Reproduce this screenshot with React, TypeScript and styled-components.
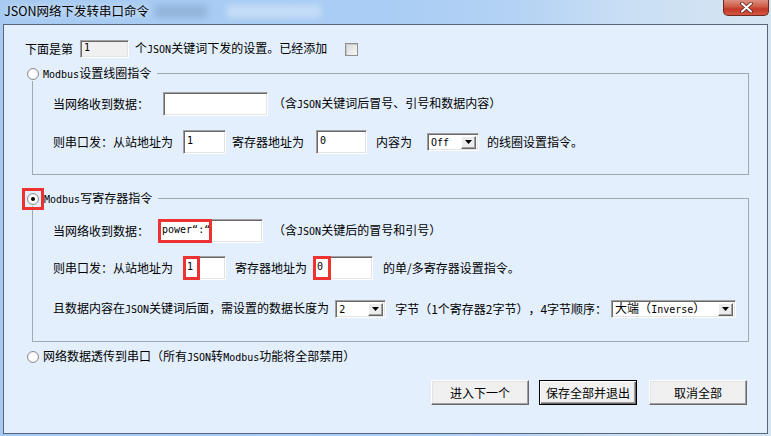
import React from "react";
import styled, { createGlobalStyle, css } from "styled-components";

const GlobalStyle = createGlobalStyle`
  html, body { margin: 0; padding: 0; }
  body {
    background: #a9cdf4;
    font-family: "Noto Sans CJK SC", "DejaVu Sans", sans-serif;
    font-size: 12px;
    color: #000;
    text-spacing-trim: space-all;
  }
`;

const Window = styled.div`
  width: 771px;
  height: 436px;
  display: flex;
  flex-direction: column;
  overflow: hidden;
  background: linear-gradient(90deg, #a6caf2 0%, #a9cdf4 50%, #b3d2f4 66%, #cadff4 82%, #d6e5f2 100%);
`;

const TitleBar = styled.div`
  height: 24px;
  flex-shrink: 0;
  display: flex;
  align-items: flex-start;
`;

const Title = styled.div`
  margin: 4px 0 0 4px;
  font-size: 12.5px;
  line-height: 14px;
  white-space: nowrap;
  text-shadow: 0 0 6px rgba(255, 255, 255, 0.9);
`;

// blurred shapes of the window behind the glass frame
const Ghost = styled.div<{ $w: number; $ml: number; $tone: string }>`
  margin: 5px 0 0 ${(p) => p.$ml}px;
  width: ${(p) => p.$w}px;
  height: 13px;
  background: ${(p) => p.$tone};
  filter: blur(3px);
`;

const CloseBtn = styled.div`
  margin: 0 2px 0 auto;
  width: 46px;
  height: 16px;
  box-sizing: border-box;
  border: 1px solid #6e2a22;
  border-top: none;
  border-radius: 0 0 5px 5px;
  background: linear-gradient(#dc8f80 0%, #cf5a46 45%, #c2382a 60%, #d4583f 100%);
  display: flex;
  align-items: center;
  justify-content: center;
`;

const Client = styled.div`
  flex: 1;
  min-height: 0;
  margin: 0 3px 2px 3px;
  border: 1px solid #566579;
  background: #e3effd;
  display: flex;
  flex-direction: column;
  padding-top: 15px;
`;

const Row = styled.div<{ $top?: number; $left?: number; $h?: number }>`
  display: flex;
  align-items: center;
  white-space: nowrap;
  height: ${(p) => p.$h ?? 24}px;
  margin-top: ${(p) => p.$top ?? 0}px;
  margin-left: ${(p) => p.$left ?? 0}px;
`;

const Text = styled.span<{ $ml?: number }>`
  margin-left: ${(p) => p.$ml ?? 0}px;
  line-height: 14px;
`;

const Lat = styled.span`
  font-family: "DejaVu Sans Mono", "Liberation Mono", monospace;
  font-size: 10px;
`;

const Edit = styled.div<{ $w: number; $h?: number; $ml?: number; $bg?: string }>`
  position: relative;
  box-sizing: border-box;
  width: ${(p) => p.$w}px;
  height: ${(p) => p.$h ?? 24}px;
  margin-left: ${(p) => p.$ml ?? 0}px;
  background: ${(p) => p.$bg ?? "#fff"};
  border: 1px solid;
  border-color: #a0a0a0 #fff #fff #a0a0a0;
  box-shadow: inset 1px 1px 0 #696969, inset -1px -1px 0 #e3e3e3;
  display: flex;
  align-items: center;
  padding: 0 0 2px 3px;
  font-family: "DejaVu Sans Mono", "Liberation Mono", monospace;
  font-size: 10px;
  line-height: 12px;
`;

const Caret = styled.span`
  width: 1px;
  height: 13px;
  background: #000;
  margin-left: 1px;
`;

// red annotation frame drawn over part of a field
const Mark = styled.span<{ $w: number; $left?: number }>`
  position: absolute;
  left: ${(p) => p.$left ?? -1}px;
  top: -1px;
  bottom: -1px;
  width: ${(p) => p.$w}px;
  box-sizing: border-box;
  border: 3px solid #ee3131;
`;

const Combo = styled.div<{ $w: number; $ml?: number }>`
  box-sizing: border-box;
  width: ${(p) => p.$w}px;
  height: 18px;
  margin-left: ${(p) => p.$ml ?? 0}px;
  background: #fff;
  border: 1px solid;
  border-color: #a0a0a0 #fff #fff #a0a0a0;
  box-shadow: inset 1px 1px 0 #696969, inset -1px -1px 0 #e3e3e3;
  display: flex;
  align-items: center;
  padding: 0 2px 0 3px;
`;

const ComboText = styled.span`
  flex: 1;
  line-height: 14px;
  white-space: nowrap;
`;

const DropBtn = styled.span`
  width: 15px;
  height: 13px;
  box-sizing: border-box;
  background: #ececec;
  border: 1px solid;
  border-color: #fff #696969 #696969 #fff;
  box-shadow: inset -1px -1px 0 #a0a0a0;
  display: flex;
  align-items: center;
  justify-content: center;
`;

const RadioBox = styled.span<{ $checked?: boolean }>`
  width: 12px;
  height: 12px;
  box-sizing: border-box;
  flex-shrink: 0;
  border-radius: 50%;
  border: 1px solid #8c8c8c;
  background: radial-gradient(circle at 50% 50%, #fff 0 45%, #e4e4e4 100%);
  display: inline-flex;
  align-items: center;
  justify-content: center;
  ${(p) =>
    p.$checked &&
    css`
      &::after {
        content: "";
        width: 4px;
        height: 4px;
        border-radius: 50%;
        background: #000;
      }
    `}
`;

const RadioMark = styled.span`
  display: inline-flex;
  outline: 3px solid #ee3131;
  outline-offset: 2px;
`;

const Check = styled.span<{ $ml: number }>`
  width: 13px;
  height: 13px;
  box-sizing: border-box;
  margin-left: ${(p) => p.$ml}px;
  border: 1px solid #8e8f8f;
  background: linear-gradient(135deg, #d8d8d8, #f8f8f8);
  box-shadow: inset 1px 1px 0 #c8c8c8;
`;

const Group = styled.fieldset<{ $top: number; $pt: number; $pb: number }>`
  margin: ${(p) => p.$top}px 18px 0 28px;
  padding: ${(p) => p.$pt}px 0 ${(p) => p.$pb}px 20px;
  border: 1px solid #a3a9b0;
  min-width: 0;
`;

const Legend = styled.legend<{ $gap: number }>`
  display: flex;
  align-items: center;
  gap: ${(p) => p.$gap}px;
  height: 15px;
  margin-left: -26px;
  padding: 0 6px 0 0;
  white-space: nowrap;
  line-height: 15px;
`;

const ButtonRow = styled.div`
  display: flex;
  justify-content: flex-end;
  margin: 16px 20px 0 0;
`;

const Btn = styled.button<{ $ml: number; $default?: boolean }>`
  width: 98px;
  height: 25px;
  box-sizing: border-box;
  margin-left: ${(p) => p.$ml}px;
  padding: 0;
  font-family: "Noto Sans CJK SC", sans-serif;
  font-size: 12px;
  color: #000;
  background: #f0f0f0;
  border: 1px solid;
  border-color: #fff #696969 #696969 #fff;
  box-shadow: inset -1px -1px 0 #a0a0a0, inset 1px 1px 0 #e3e3e3;
  ${(p) =>
    p.$default &&
    css`
      border-color: #000;
      box-shadow: inset 1px 1px 0 #fff, inset -1px -1px 0 #696969, inset -2px -2px 0 #a0a0a0;
    `}
`;

const Radio = ({ checked, marked }: { checked?: boolean; marked?: boolean }) =>
  marked ? (
    <RadioMark>
      <RadioBox $checked={checked} />
    </RadioMark>
  ) : (
    <RadioBox $checked={checked} />
  );

const Arrow = () => (
  <svg width="7" height="4" viewBox="0 0 7 4">
    <polygon points="0,0 7,0 3.5,4" fill="#000" />
  </svg>
);

const Select = ({ w, ml, children }: { w: number; ml: number; children: React.ReactNode }) => (
  <Combo $w={w} $ml={ml}>
    <ComboText>{children}</ComboText>
    <DropBtn>
      <Arrow />
    </DropBtn>
  </Combo>
);

export default function App() {
  return (
    <>
      <GlobalStyle />
      <Window>
        <TitleBar>
          <Title>JSON网络下发转串口命令</Title>
          <Ghost $w={52} $ml={6} $tone="rgba(110, 140, 175, 0.35)" />
          <Ghost $w={94} $ml={20} $tone="rgba(205, 225, 248, 0.8)" />
          <CloseBtn>
            <svg width="13" height="11" viewBox="0 0 13 11">
              <path d="M2 1.5l9 8M11 1.5l-9 8" stroke="#5a2520" strokeWidth="3.6" strokeLinecap="round" />
              <path d="M2 1.5l9 8M11 1.5l-9 8" stroke="#fff" strokeWidth="2" strokeLinecap="round" />
            </svg>
          </CloseBtn>
        </TitleBar>

        <Client>
          <Row $h={18} $left={21}>
            <Text>下面是第</Text>
            <Edit $w={49} $h={18} $ml={7} $bg="#f0f0f0">1</Edit>
            <Text $ml={6}>
              个<Lat>JSON</Lat>关键词下发的设置。已经添加
            </Text>
            <Check $ml={18} />
          </Row>

          <Group $top={8} $pt={11} $pb={20}>
            <Legend $gap={4}>
              <Radio />
              <span>
                <Lat>Modbus</Lat>设置线圈指令
              </span>
            </Legend>
            <Row>
              <Text>当网络收到数据：</Text>
              <Edit $w={105} $ml={14} />
              <Text $ml={5}>
                （含<Lat>JSON</Lat>关键词后冒号、引号和数据内容）
              </Text>
            </Row>
            <Row $top={14}>
              <Text>则串口发：从站地址为</Text>
              <Edit $w={43} $ml={10}>1</Edit>
              <Text $ml={6}>寄存器地址为</Text>
              <Edit $w={51} $ml={12}>0</Edit>
              <Text $ml={9}>内容为</Text>
              <Select w={52} ml={15}>
                <Lat>Off</Lat>
              </Select>
              <Text $ml={8}>的线圈设置指令。</Text>
            </Row>
          </Group>

          <Group $top={16} $pt={13} $pb={23}>
            <Legend $gap={5}>
              <Radio checked marked />
              <span>
                <Lat>Modbus</Lat>写寄存器指令
              </span>
            </Legend>
            <Row>
              <Text>当网络收到数据：</Text>
              <Edit $w={105} $ml={9}>
                power“:“
                <Caret />
                <Mark $w={54} />
              </Edit>
              <Text $ml={10}>
                （含<Lat>JSON</Lat>关键后的冒号和引号）
              </Text>
            </Row>
            <Row $top={13}>
              <Text>则串口发：从站地址为</Text>
              <Edit $w={43} $ml={10}>
                1
                <Mark $w={17} $left={-1} />
              </Edit>
              <Text $ml={9}>寄存器地址为</Text>
              <Edit $w={60} $ml={6}>
                0
                <Mark $w={18} $left={-1} />
              </Edit>
              <Text $ml={10}>的单/多寄存器设置指令。</Text>
            </Row>
            <Row $top={20} $h={18}>
              <Text>
                且数据内容在<Lat>JSON</Lat>关键词后面，需设置的数据长度为
              </Text>
              <Select w={51} ml={6}>
                <Lat>2</Lat>
              </Select>
              <Text $ml={9}>字节（1个寄存器2字节），4字节顺序：</Text>
              <Select w={125} ml={4}>
                大端（<Lat>Inverse</Lat>）
              </Select>
            </Row>
          </Group>

          <Row $top={7} $h={15} $left={23}>
            <Radio />
            <Text $ml={4}>
              网络数据透传到串口（所有<Lat>JSON</Lat>转<Lat>Modbus</Lat>功能将全部禁用）
            </Text>
          </Row>

          <ButtonRow>
            <Btn $ml={0}>进入下一个</Btn>
            <Btn $ml={10} $default>
              保存全部并退出
            </Btn>
            <Btn $ml={12}>取消全部</Btn>
          </ButtonRow>
        </Client>
      </Window>
    </>
  );
}
